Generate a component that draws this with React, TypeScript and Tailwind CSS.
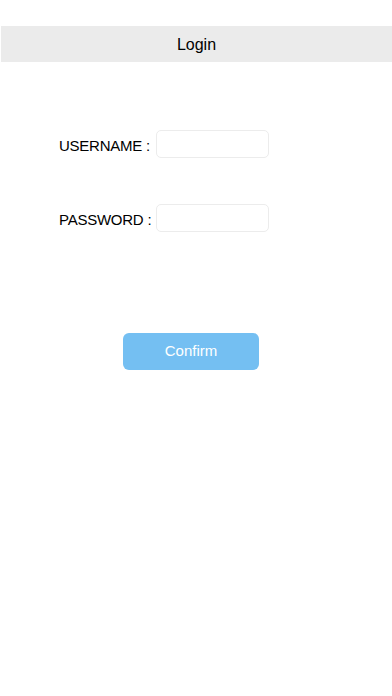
import React from "react";

export default function App() {
  return (
    <div
      className="w-[392px] h-[696px] bg-white text-black overflow-hidden"
      style={{ fontFamily: '"Liberation Sans", Arial, sans-serif' }}
    >
      <div className="h-[26px]" />
      <header className="ml-px h-[36px] bg-[#ebebeb] flex items-center justify-center">
        <h1 className="text-[16px] leading-none pt-[1px]">Login</h1>
      </header>

      <form className="flex flex-col pt-[68px]" onSubmit={(e) => e.preventDefault()}>
        <label className="flex items-center pl-[59px] h-7">
          <span className="w-[97px] flex text-[15px] tracking-[-0.25px] leading-none mt-[3px]">
            USERNAME<span className="ml-[4px]">:</span>
          </span>
          <input
            type="text"
            className="w-[113px] h-7 rounded-[5px] border border-[#ececec] outline-none px-2"
          />
        </label>

        <label className="flex items-center pl-[59px] h-7 mt-[46px]">
          <span className="w-[97px] flex text-[15px] tracking-[-0.25px] leading-none mt-[3px]">
            PASSWORD<span className="ml-[4px]">:</span>
          </span>
          <input
            type="password"
            className="w-[113px] h-7 rounded-[5px] border border-[#ececec] outline-none px-2"
          />
        </label>

        <div className="flex pl-[123px] pt-[101px]">
          <button
            type="submit"
            className="w-[136px] h-[37px] rounded-[6px] bg-[#74bff2] text-white text-[15px]"
          >
            Confirm
          </button>
        </div>
      </form>
    </div>
  );
}
